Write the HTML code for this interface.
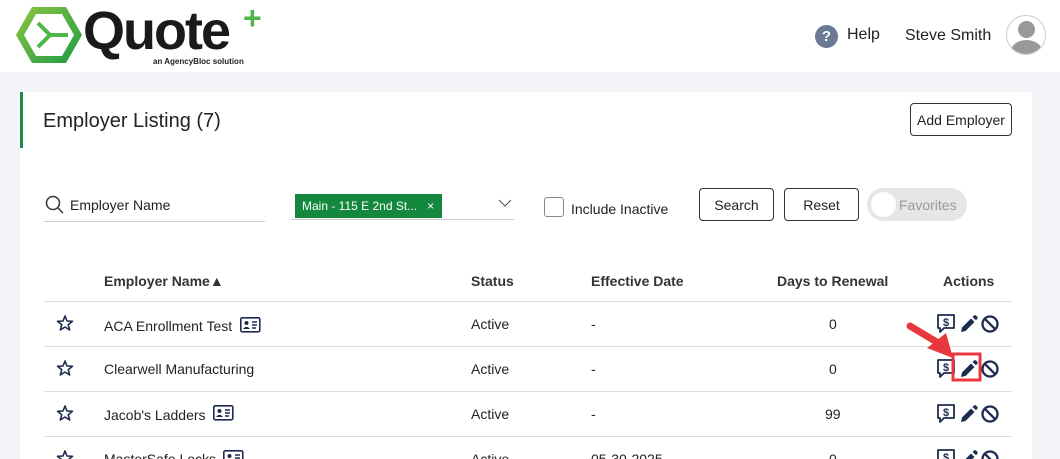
<!DOCTYPE html>
<html><head><style>
*{box-sizing:border-box;margin:0;padding:0}
html,body{width:1060px;height:459px;overflow:hidden}
body{background:#f4f5f8;font-family:"Liberation Sans",sans-serif;color:#222;position:relative}
.a{position:absolute}
.hdr{left:0;top:0;width:1060px;height:72px;background:#fff}
.card{left:20px;top:92px;width:1012px;height:367px;background:#fff}
.btn{position:absolute;border:1px solid #333;border-radius:4px;background:#fff;font-size:14px;display:flex;align-items:center;justify-content:center}
.th{position:absolute;top:273px;font-size:14px;font-weight:bold;color:#333}
.row{position:absolute;left:44px;width:968px;border-top:1px solid #dcdcdc;height:45px}
.t{position:absolute;font-size:14px;color:#222}
</style></head><body>
<div class="a hdr"></div>
<svg class="a" style="left:14px;top:4px" width="70" height="62" viewBox="0 0 70 62">
<defs><linearGradient id="g" x1="0" y1="0" x2="1" y2="1"><stop offset="0" stop-color="#8cc63f"/><stop offset="1" stop-color="#1e9a45"/></linearGradient></defs>
<polygon points="18,3 52,3 68,31 52,59 18,59 2,31" fill="url(#g)"/>
<polygon points="22,10 48,10 60,31 48,52 22,52 10,31" fill="#fff"/>
<path d="M24,19 L36,31 L24,43 M36,31 L54,31" stroke="#4cb648" stroke-width="4" fill="none"/>
</svg>
<div class="a" style="left:83px;top:0px;font-size:54px;font-weight:bold;color:#1a1a1a;letter-spacing:-2px;line-height:62px">Quote</div>
<div class="a" style="left:243px;top:2px;font-size:32px;font-weight:bold;color:#4cb648;line-height:32px">+</div>
<div class="a" style="left:153px;top:57px;font-size:8px;font-weight:bold;color:#222">an AgencyBloc solution</div>
<div class="a" style="left:815px;top:25px;width:23px;height:23px;border-radius:50%;background:#6b7a93;color:#fff;font-weight:bold;font-size:15px;text-align:center;line-height:23px">?</div>
<div class="a" style="left:847px;top:26px;font-size:16px">Help</div>
<div class="a" style="left:905px;top:27px;font-size:16px">Steve Smith</div>
<div class="a" style="left:1006px;top:15px;width:40px;height:40px;border-radius:50%;border:1px solid #ccc;overflow:hidden;background:#fff">
<div class="a" style="left:11px;top:5px;width:17px;height:17px;border-radius:50%;background:#999"></div>
<div class="a" style="left:4px;top:24px;width:31px;height:22px;border-radius:50% 50% 0 0;background:#999"></div></div>
<div class="a card"></div>
<div class="a" style="left:20px;top:92px;width:3px;height:56px;background:#1e8a45"></div>
<div class="a" style="left:43px;top:110px;font-size:20px;color:#222">Employer Listing (7)</div>
<div class="btn" style="left:910px;top:103px;width:102px;height:33px">Add Employer</div>
<svg class="a" style="left:45px;top:195px" width="20" height="20"><circle cx="8" cy="8" r="6.5" stroke="#333" stroke-width="1.5" fill="none"/><path d="M13 13 L18 18" stroke="#333" stroke-width="1.5"/></svg>
<div class="t" style="left:70px;top:197px">Employer Name</div>
<div class="a" style="left:44px;top:221px;width:221px;height:1px;background:#ccc"></div>
<div class="a" style="left:295px;top:194px;width:147px;height:24px;background:#14883e;color:#fff;font-size:12px;line-height:24px;padding-left:7px">Main - 115 E 2nd St...&nbsp;&nbsp; ×</div>
<div class="a" style="left:291px;top:219px;width:223px;height:1px;background:#ccc"></div>
<svg class="a" style="left:498px;top:198px" width="14" height="10"><path d="M1 2 L7 8 L13 2" stroke="#555" fill="none"/></svg>
<div class="a" style="left:544px;top:197px;width:20px;height:20px;border:1px solid #888;border-radius:3px"></div>
<div class="t" style="left:571px;top:201px">Include Inactive</div>
<div class="btn" style="left:699px;top:188px;width:75px;height:33px">Search</div>
<div class="btn" style="left:784px;top:188px;width:75px;height:33px">Reset</div>
<div class="a" style="left:867px;top:188px;width:100px;height:33px;border-radius:17px;background:#e6e6e6"></div>
<div class="a" style="left:871px;top:192px;width:25px;height:25px;border-radius:50%;background:#fff"></div>
<div class="a" style="left:899px;top:197px;font-size:14px;color:#999">Favorites</div>
<div class="th" style="left:104px">Employer Name▲</div>
<div class="th" style="left:471px">Status</div>
<div class="th" style="left:591px">Effective Date</div>
<div class="th" style="left:777px">Days to Renewal</div>
<div class="th" style="left:943px">Actions</div>
<div class="row" style="top:301px"></div>
<div class="row" style="top:346px"></div>
<div class="row" style="top:391px"></div>
<div class="row" style="top:436px"></div>
<div class="t" style="left:104px;top:318px">ACA Enrollment Test</div>
<div class="t" style="left:104px;top:361px">Clearwell Manufacturing</div>
<div class="t" style="left:104px;top:407px">Jacob's Ladders</div>
<div class="t" style="left:104px;top:451px">MasterSafe Locks</div>
<div class="t" style="left:471px;top:316px">Active</div><div class="t" style="left:471px;top:361px">Active</div><div class="t" style="left:471px;top:406px">Active</div><div class="t" style="left:471px;top:451px">Active</div>
<div class="t" style="left:591px;top:316px">-</div><div class="t" style="left:591px;top:361px">-</div><div class="t" style="left:591px;top:406px">-</div><div class="t" style="left:591px;top:451px">05-30-2025</div>
<div class="t" style="left:829px;top:316px">0</div><div class="t" style="left:829px;top:361px">0</div><div class="t" style="left:825px;top:406px">99</div><div class="t" style="left:829px;top:451px">0</div>
<svg class="a" style="left:0;top:0" width="1060" height="459">
<defs>
<g id="star"><path d="M8 1 L10 6 L15.5 6.3 L11.2 9.7 L12.7 15 L8 12 L3.3 15 L4.8 9.7 L0.5 6.3 L6 6 Z" fill="none" stroke="#1d2b4f" stroke-width="1.6" stroke-linejoin="round"/></g>
<g id="card"><rect x="0.8" y="0.8" width="19" height="14" rx="1.5" fill="none" stroke="#1d2b4f" stroke-width="1.6"/><circle cx="6.5" cy="6" r="2" fill="#1d2b4f"/><path d="M3 12 Q6.5 7.5 10 12Z" fill="#1d2b4f"/><path d="M12 5H17M12 8H17M12 11H16" stroke="#1d2b4f" stroke-width="1.5"/></g>
<g id="act">
<path d="M1 1H17V14H7L3 18V14H1Z" fill="none" stroke="#1d2b4f" stroke-width="1.8" stroke-linejoin="round"/>
<text x="9" y="12" font-size="11" font-weight="bold" text-anchor="middle" fill="#1d2b4f" font-family="Liberation Sans">$</text>
<path d="M24 18 L25 13.5 L34 4.5 L37.5 8 L28.5 17 Z M35.5 3 L37 1.5 Q38 .8 39 1.5 L40.5 3 Q41 4 40.3 4.8 L39 6.2 Z" fill="#1d2b4f"/>
<circle cx="53" cy="10" r="7.5" fill="none" stroke="#1d2b4f" stroke-width="2.3"/><path d="M47.8 4.8 L58.2 15.2" stroke="#1d2b4f" stroke-width="2.3"/>
</g>
</defs>
<use href="#star" x="57" y="315"/><use href="#star" x="57" y="360"/><use href="#star" x="57" y="405"/><use href="#star" x="57" y="450"/>
<use href="#card" x="240" y="317"/><use href="#card" x="213" y="405"/><use href="#card" x="223" y="450"/>
<use href="#act" x="937" y="314"/><use href="#act" x="937" y="359"/><use href="#act" x="937" y="404"/><use href="#act" x="937" y="449"/>
<rect x="953" y="354" width="27" height="26" fill="none" stroke="#e8383d" stroke-width="3"/>
<path d="M910 326 L940 344" stroke="#e8383d" stroke-width="7" stroke-linecap="round"/>
<path d="M927 348 L953 358 L946 333 Z" fill="#e8383d"/>
</svg>
</body></html>
